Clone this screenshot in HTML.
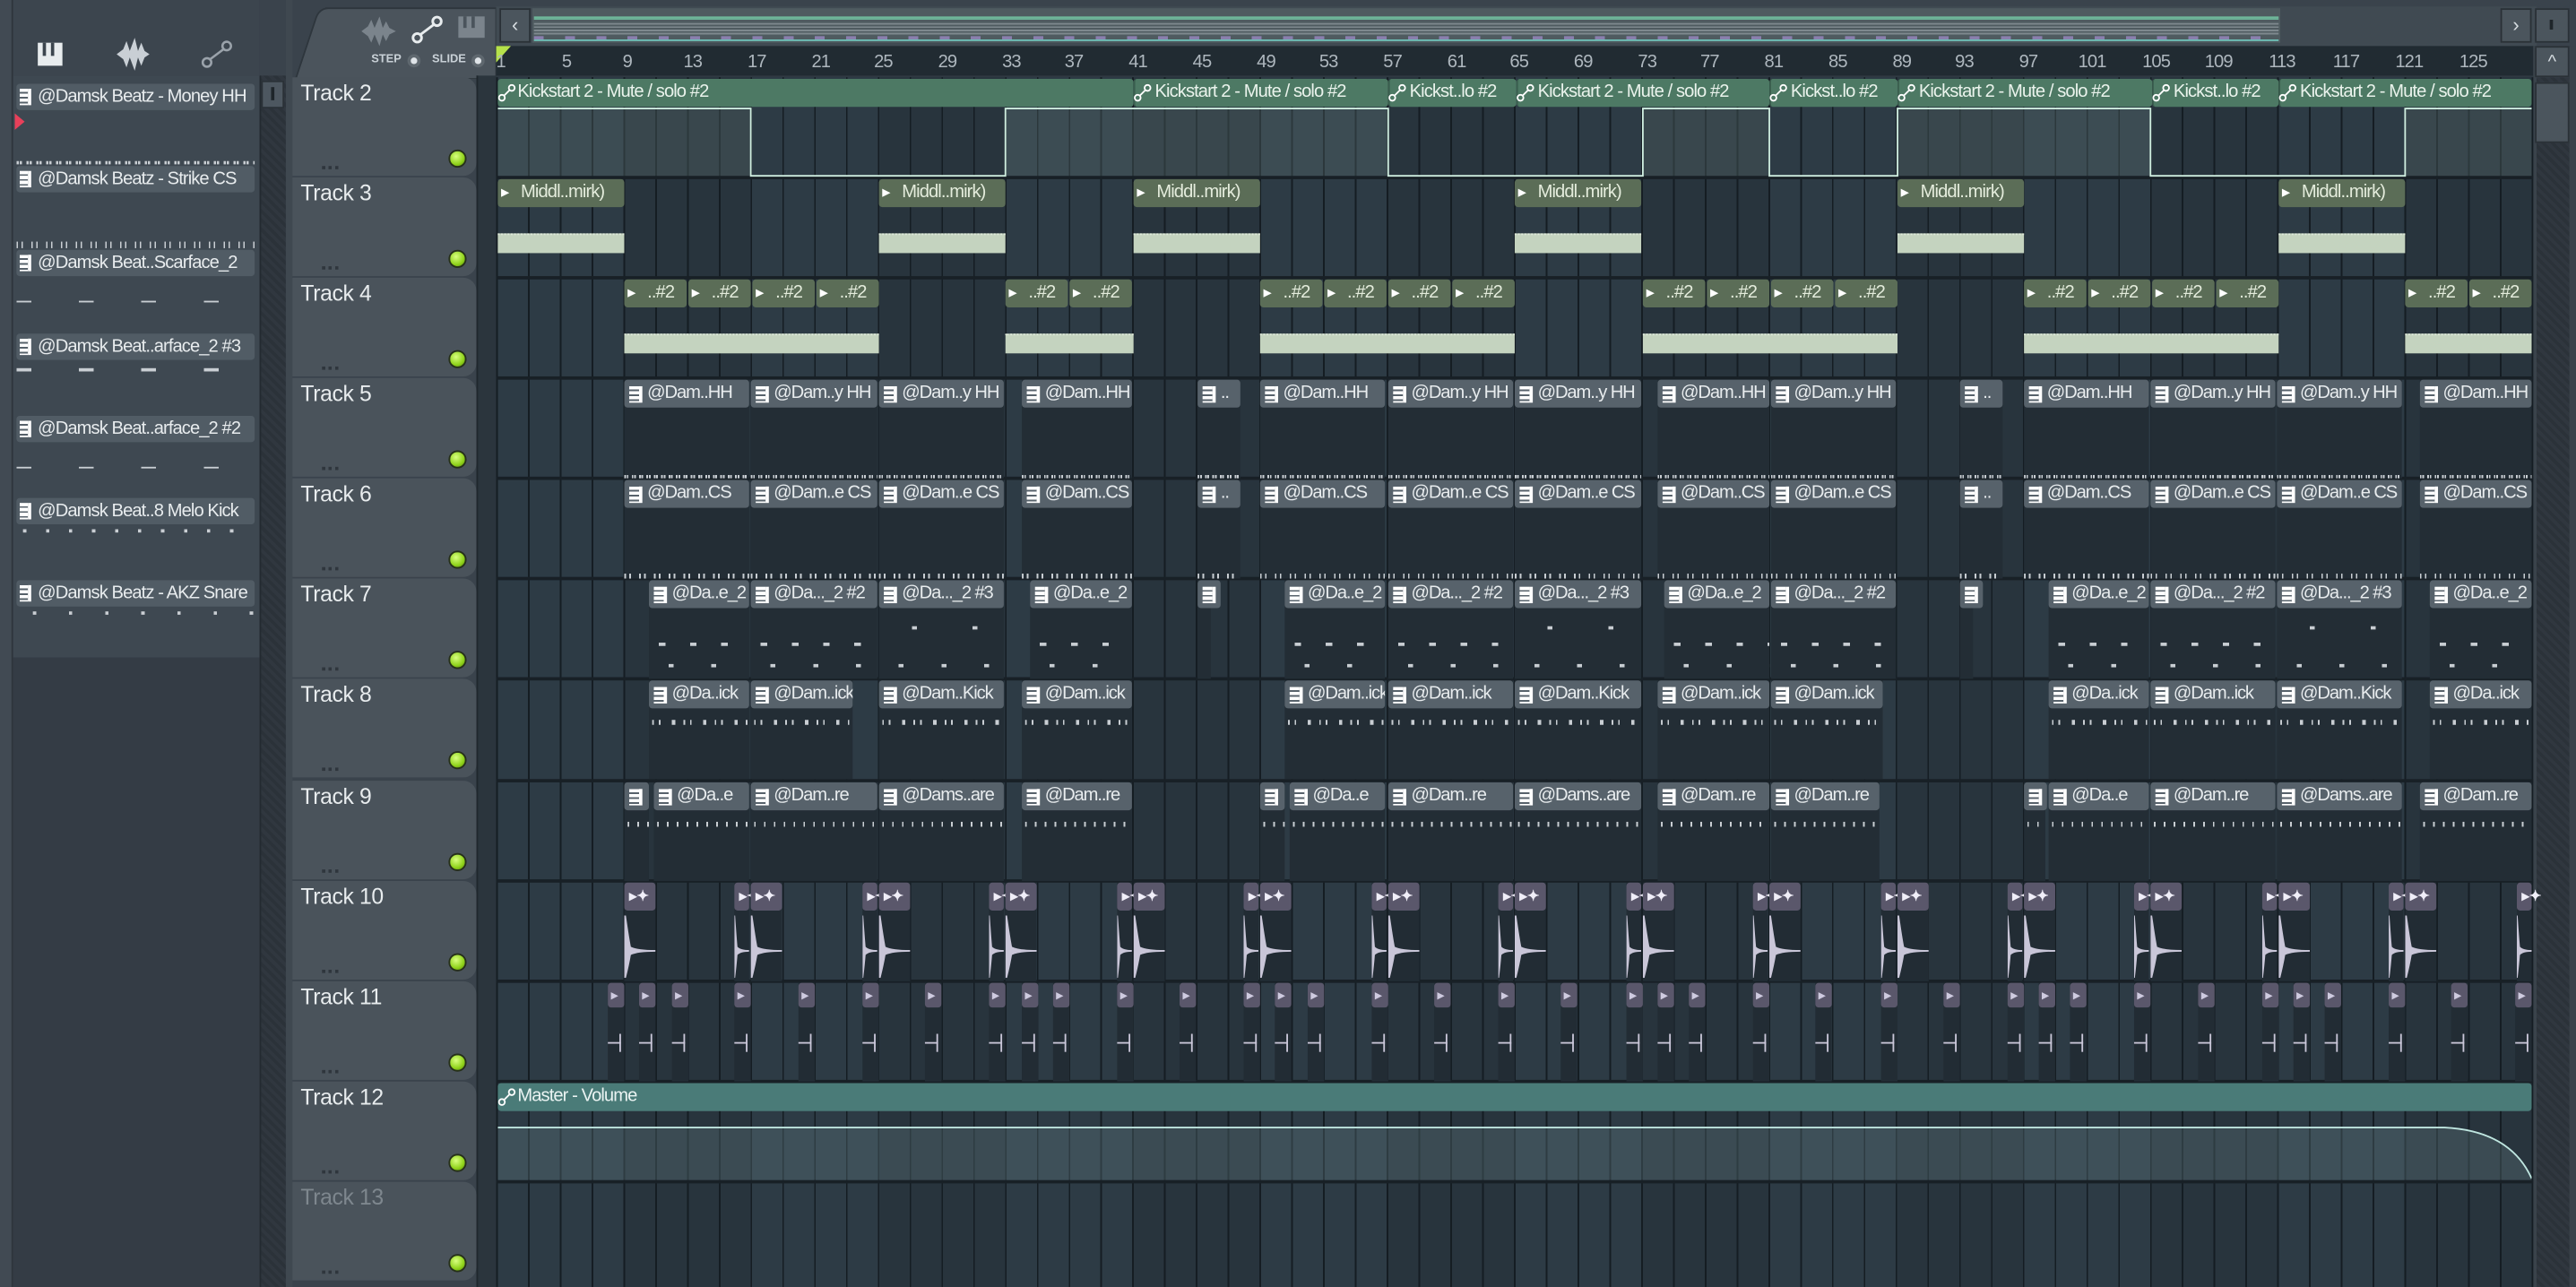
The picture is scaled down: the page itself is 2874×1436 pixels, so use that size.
<!DOCTYPE html>
<html><head><meta charset="utf-8">
<style>
*{margin:0;padding:0;box-sizing:border-box}
html,body{width:2874px;height:1436px;overflow:hidden;background:#3a434c}
#s{position:absolute;left:0;top:0;width:1568px;height:783px;transform:scale(1.8329,1.8339);transform-origin:0 0;font-family:"Liberation Sans",sans-serif;background:#3a434c;overflow:hidden}
.a{position:absolute}
.lbl{position:absolute;left:10px;width:145px;height:16px;background:#515c65;border-radius:2px;color:#e8ecee;font-size:11px;line-height:16px;padding-left:13px;white-space:nowrap;overflow:hidden;letter-spacing:-0.5px}
.ic{position:absolute;left:2px;top:3px;width:7px;height:10px;background:repeating-linear-gradient(180deg,#fff 0 2px,#56616a 2px 3px);border-right:2px solid #fff}
.th{position:absolute;left:178px;width:112px;height:60px;background:#4a535b;border-radius:0 8px 8px 0;color:#e8ecee;font-size:13.5px;padding:2px 0 0 5px;letter-spacing:-0.2px}
.th .led{position:absolute;right:6px;bottom:5px;width:11px;height:11px;border-radius:50%;background:radial-gradient(circle at 40% 35%,#d8ff80,#8fd21a 60%,#4d7a0a);border:1px solid #26301a}
.th .dd{position:absolute;left:18px;bottom:4px;width:10px;height:2px;background:repeating-linear-gradient(90deg,#2f363d 0 2px,transparent 2px 4px)}
#grid{position:absolute;left:302px;top:47px;width:1240px;height:736px;background:
repeating-linear-gradient(90deg,#151d23 0 1px,transparent 1px 19.36px),
repeating-linear-gradient(90deg,#2d3b45 0 77.44px,#28343d 77.44px 154.88px)}
.rl{position:absolute;left:302px;width:1240px;height:2px;background:#182026}
.p{position:absolute;height:60px;background:#232d35}
.p b{display:block;position:relative;height:17px;background:#57626b;border-radius:2px;color:#e8ecee;font-weight:normal;font-size:11px;line-height:17px;padding-left:14px;white-space:nowrap;overflow:hidden;letter-spacing:-0.6px}
.p b:before{content:"";position:absolute;left:3px;top:4px;width:6px;height:10px;background:repeating-linear-gradient(180deg,#fff 0 2px,#57626b 2px 3px);border-right:2px solid #fff}
.n5{position:absolute;left:0;right:0;bottom:0;height:2px;background:repeating-linear-gradient(90deg,#c9ced3 0 1px,transparent 1px 1.5px,#c9ced3 1.5px 2.5px,transparent 2.5px 4.5px)}
.n6{position:absolute;left:0;right:0;bottom:0;height:3px;background:repeating-linear-gradient(90deg,#c9ced3 0 1px,transparent 1px 3px,#c9ced3 3px 4px,transparent 4px 9px)}
.n7{position:absolute;left:0;right:0;top:38px;height:2px;background:repeating-linear-gradient(90deg,transparent 0 6px,#c9ced3 6px 10px,transparent 10px 19px)}
.n7b{position:absolute;left:0;right:0;top:51px;height:2px;background:repeating-linear-gradient(90deg,transparent 0 12px,#c9ced3 12px 15px,transparent 15px 26px)}
.n7c{position:absolute;left:0;right:0;top:28px;height:2px;background:repeating-linear-gradient(90deg,transparent 0 20px,#c9ced3 20px 23px,transparent 23px 37px)}
.n8{position:absolute;left:2px;right:0;top:24px;height:3px;background:repeating-linear-gradient(90deg,#c9ced3 0 1px,transparent 1px 4px,#c9ced3 4px 5px,transparent 5px 12px,#c9ced3 12px 14px,transparent 14px 19px)}
.n9{position:absolute;left:2px;right:0;top:24px;height:3px;background:repeating-linear-gradient(90deg,#c9ced3 0 1px,transparent 1px 6px)}
.au{position:absolute;height:60px}
.au b{display:block;height:17px;background:#5b6d57;border-radius:2px;color:#e4ecdc;font-weight:normal;font-size:11px;line-height:17px;padding-left:14px;white-space:nowrap;overflow:hidden;position:relative;letter-spacing:-0.5px}
.au b:before{content:"\25B8";position:absolute;left:2px;top:0;font-size:10px;color:#fff}
.wv{position:absolute;left:0;right:0;top:33px;height:12px;background:#c4d3bf;border-top:1px dotted #e0eadc}
.k{position:absolute;height:60px;background:#222c34}
.k b{display:block;height:17px;background:#5a576b;border-radius:2px;position:relative}
.k b:before{content:"\25B8\2726";position:absolute;left:3px;top:0;font-size:9px;line-height:17px;color:#f0eef8}
.kw{position:absolute;left:0;top:20px;width:100%;height:38px}
.t{position:absolute;height:60px;background:#222c34}
.t b{display:block;height:15px;width:10px;background:#5a576b;border-radius:2px;position:relative}
.t b:before{content:"\25B8";position:absolute;left:2px;top:0;font-size:8px;line-height:15px;color:#cfcbe0}
.t i{position:absolute;left:0;top:36px;width:8px;height:1px;background:#c9c6d8}
.t i:after{content:"";position:absolute;right:0;top:-5px;width:1px;height:11px;background:#c9c6d8}
</style></head><body><div id="s">

<div class="a" style="left:0;top:0;width:8px;height:783px;background:#414a53;border-right:1px solid #2e353c"></div>
<div class="a" style="left:8px;top:0;width:150px;height:783px;background:#343c45"></div>
<div class="a" style="left:8px;top:0;width:150px;height:46px;background:#3c454e"></div>
<div class="a" style="left:8px;top:46px;width:150px;height:354px;background:#3e4851"></div>
<div class="a" style="left:23px;top:26px;width:15px;height:14px;background:#e8ecee"></div>
<div class="a" style="left:26px;top:26px;width:2px;height:8px;background:#3c454e"></div>
<div class="a" style="left:31px;top:26px;width:2px;height:8px;background:#3c454e"></div>
<svg class="a" style="left:70px;top:22px" width="26" height="22"><path d="M1 11 L5 8 L7 3 L9 9 L12 1 L14 9 L16 4 L18 9 L21 11 L18 13 L16 18 L14 13 L12 21 L9 13 L7 19 L5 14 Z" fill="#c9cfd5"/></svg>
<svg class="a" style="left:122px;top:24px" width="20" height="18"><circle cx="4" cy="14" r="2.6" fill="none" stroke="#9aa2aa" stroke-width="1.4"/><circle cx="16" cy="4" r="2.6" fill="none" stroke="#9aa2aa" stroke-width="1.4"/><line x1="6" y1="12" x2="14" y2="6" stroke="#9aa2aa" stroke-width="1.4"/></svg>

<div class="lbl" style="top:51px"><span class="ic"></span>@Damsk Beatz - Money HH</div>
<div class="a" style="left:9px;top:69px;width:0;height:0;border-top:5px solid transparent;border-bottom:5px solid transparent;border-left:6px solid #e8405a"></div>
<div class="a" style="left:10px;top:98px;width:145px;height:2px;background:repeating-linear-gradient(90deg,#c9ced3 0 1.5px,transparent 1.5px 2px,#c9ced3 2px 3.5px,transparent 3.5px 6px)"></div>
<div class="lbl" style="top:101px"><span class="ic"></span>@Damsk Beatz - Strike CS</div>
<div class="a" style="left:10px;top:147px;width:145px;height:4px;background:repeating-linear-gradient(90deg,#c9ced3 0 1px,transparent 1px 3px,#c9ced3 3px 4px,transparent 4px 9px)"></div>
<div class="lbl" style="top:152px"><span class="ic"></span>@Damsk Beat..Scarface_2</div>
<div class="a" style="left:10px;top:183px;width:145px;height:1px;background:repeating-linear-gradient(90deg,#c9ced3 0 9px,transparent 9px 38px)"></div>
<div class="lbl" style="top:203px"><span class="ic"></span>@Damsk Beat..arface_2 #3</div>
<div class="a" style="left:10px;top:224px;width:145px;height:2px;background:repeating-linear-gradient(90deg,#c9ced3 0 9px,transparent 9px 38px)"></div>
<div class="lbl" style="top:253px"><span class="ic"></span>@Damsk Beat..arface_2 #2</div>
<div class="a" style="left:10px;top:284px;width:145px;height:1px;background:repeating-linear-gradient(90deg,#c9ced3 0 9px,transparent 9px 38px)"></div>
<div class="lbl" style="top:303px"><span class="ic"></span>@Damsk Beat..8 Melo Kick</div>
<div class="a" style="left:14px;top:322px;width:140px;height:2px;background:repeating-linear-gradient(90deg,#c9ced3 0 2px,transparent 2px 14px)"></div>
<div class="lbl" style="top:353px"><span class="ic"></span>@Damsk Beatz - AKZ Snare</div>
<div class="a" style="left:20px;top:372px;width:135px;height:2px;background:repeating-linear-gradient(90deg,#c9ced3 0 2px,transparent 2px 22px)"></div>

<div class="a" style="left:158px;top:46px;width:16px;height:737px;background:repeating-linear-gradient(45deg,#30373f 0 2px,#2b3239 2px 4px);border-left:1px solid #232a30"></div>
<div class="a" style="left:159px;top:49px;width:14px;height:17px;background:#4d5760;border:1px solid #2a3137"></div>
<div class="a" style="left:165px;top:53px;width:2px;height:8px;background:#1e252a"></div>
<div class="a" style="left:174px;top:0;width:4px;height:783px;background:#3f4850"></div>

<svg class="a" style="left:178px;top:4px" width="124" height="44"><path d="M20 1 H124 V44 H2 L14 8 Q16 1 22 1 Z" fill="#4b545c" stroke="#2e363d"/></svg>
<svg class="a" style="left:219px;top:9px" width="24" height="20"><path d="M1 10 L5 7 L7 3 L9 8 L12 1 L14 8 L16 4 L18 8 L22 10 L18 12 L16 16 L14 12 L12 19 L9 12 L7 17 L5 13 Z" fill="#7b848c"/></svg>
<svg class="a" style="left:250px;top:9px" width="20" height="18"><circle cx="4" cy="14" r="2.6" fill="none" stroke="#e8ecee" stroke-width="1.6"/><circle cx="16" cy="4" r="2.6" fill="none" stroke="#e8ecee" stroke-width="1.6"/><line x1="6" y1="12" x2="14" y2="6" stroke="#e8ecee" stroke-width="1.6"/></svg>
<div class="a" style="left:279px;top:10px;width:16px;height:13px;background:#7b848c"></div>
<div class="a" style="left:282px;top:10px;width:2px;height:7px;background:#4b545c"></div>
<div class="a" style="left:287px;top:10px;width:2px;height:7px;background:#4b545c"></div>
<div class="a" style="left:226px;top:33px;color:#c8d0d6;font-size:7px;font-weight:bold">STEP</div>
<div class="a" style="left:248px;top:33px;width:8px;height:8px;border-radius:50%;background:#dfe4e8;border:2px solid #5f686f"></div>
<div class="a" style="left:263px;top:33px;color:#c8d0d6;font-size:7px;font-weight:bold">SLIDE</div>
<div class="a" style="left:287px;top:33px;width:8px;height:8px;border-radius:50%;background:#dfe4e8;border:2px solid #5f686f"></div>

<div class="a" style="left:302px;top:4px;width:1242px;height:24px;background:#404a52"></div>
<div class="a" style="left:304px;top:5px;width:19px;height:21px;background:#4b555d;border:1px solid #2a3137;color:#d7dde1;font-size:12px;text-align:center;line-height:19px">&lsaquo;</div>
<div class="a" style="left:324px;top:5px;width:1064px;height:21px;background:#4f5b60"></div>
<div class="a" style="left:325px;top:10px;width:1062px;height:2px;border-top:1px solid #6eb79a;border-bottom:1px solid #6eb79a"></div>
<div class="a" style="left:325px;top:14px;width:1062px;height:8px;background:repeating-linear-gradient(180deg,#a4aeb3 0 1px,transparent 1px 2px);opacity:.55"></div>
<div class="a" style="left:325px;top:22px;width:1062px;height:2px;background:repeating-linear-gradient(90deg,#8a7fae 0 6px,transparent 6px 19px)"></div>
<div class="a" style="left:325px;top:24px;width:1062px;height:1px;background:#6fbfb7"></div>
<div class="a" style="left:1522px;top:5px;width:19px;height:21px;background:#4b555d;border:1px solid #2a3137;color:#d7dde1;font-size:12px;text-align:center;line-height:19px">&rsaquo;</div>
<div class="a" style="left:1543px;top:5px;width:21px;height:21px;background:#4b555d;border:1px solid #2a3137"></div>
<div class="a" style="left:1552px;top:12px;width:2px;height:6px;background:#1e252a"></div>

<div class="a" style="left:302px;top:28px;width:1240px;height:19px;background:#212b32;border-bottom:1px solid #2f3a42"></div>
<div class="a" style="left:302px;top:28px;width:0;height:0;border-left:9px solid #b6e24a;border-bottom:10px solid transparent"></div>
<div class="a" style="left:302px;top:30px;width:1240px;height:16px;color:#aeb7be;font-size:11px;line-height:16px;letter-spacing:-0.5px">
<span class="a" style="left:0">1</span><span class="a" style="left:40px">5</span><span class="a" style="left:77px">9</span><span class="a" style="left:114px">13</span><span class="a" style="left:153px">17</span><span class="a" style="left:192px">21</span><span class="a" style="left:230px">25</span><span class="a" style="left:269px">29</span><span class="a" style="left:308px">33</span><span class="a" style="left:346px">37</span><span class="a" style="left:385px">41</span><span class="a" style="left:424px">45</span><span class="a" style="left:463px">49</span><span class="a" style="left:501px">53</span><span class="a" style="left:540px">57</span><span class="a" style="left:579px">61</span><span class="a" style="left:617px">65</span><span class="a" style="left:656px">69</span><span class="a" style="left:695px">73</span><span class="a" style="left:733px">77</span><span class="a" style="left:772px">81</span><span class="a" style="left:811px">85</span><span class="a" style="left:850px">89</span><span class="a" style="left:888px">93</span><span class="a" style="left:927px">97</span><span class="a" style="left:963px">101</span><span class="a" style="left:1002px">105</span><span class="a" style="left:1040px">109</span><span class="a" style="left:1079px">113</span><span class="a" style="left:1118px">117</span><span class="a" style="left:1156px">121</span><span class="a" style="left:1195px">125</span></div>

<div class="a" style="left:1542px;top:28px;width:26px;height:755px;background:#3a434b"></div>
<div class="a" style="left:1544px;top:47px;width:20px;height:736px;background:repeating-linear-gradient(45deg,#30373f 0 2px,#2b3239 2px 4px)"></div>
<div class="a" style="left:1543px;top:28px;width:21px;height:19px;background:#4b555d;border:1px solid #2a3137;color:#d7dde1;font-size:11px;text-align:center;line-height:19px">^</div>
<div class="a" style="left:1543px;top:50px;width:21px;height:37px;background:#4b555d;border:1px solid #2a3137"></div>

<div class="a" style="left:290px;top:46px;width:12px;height:737px;background:#2b353d;border-left:1px solid #1f272d"></div>

<div class="th" style="top:47px">Track 2<i class="dd"></i><i class="led"></i></div>
<div class="th" style="top:108px">Track 3<i class="dd"></i><i class="led"></i></div>
<div class="th" style="top:169px">Track 4<i class="dd"></i><i class="led"></i></div>
<div class="th" style="top:230px">Track 5<i class="dd"></i><i class="led"></i></div>
<div class="th" style="top:291px">Track 6<i class="dd"></i><i class="led"></i></div>
<div class="th" style="top:352px">Track 7<i class="dd"></i><i class="led"></i></div>
<div class="th" style="top:413px">Track 8<i class="dd"></i><i class="led"></i></div>
<div class="th" style="top:475px">Track 9<i class="dd"></i><i class="led"></i></div>
<div class="th" style="top:536px">Track 10<i class="dd"></i><i class="led"></i></div>
<div class="th" style="top:597px">Track 11<i class="dd"></i><i class="led"></i></div>
<div class="th" style="top:658px">Track 12<i class="dd"></i><i class="led"></i></div>
<div class="th" style="top:719px;color:#7e878e">Track 13<i class="dd"></i><i class="led"></i></div>

<div id="grid"></div>
<div class="rl" style="top:107px"></div><div class="rl" style="top:168px"></div><div class="rl" style="top:229px"></div><div class="rl" style="top:290px"></div><div class="rl" style="top:351px"></div><div class="rl" style="top:412px"></div><div class="rl" style="top:474px"></div><div class="rl" style="top:535px"></div><div class="rl" style="top:596px"></div><div class="rl" style="top:657px"></div><div class="rl" style="top:718px"></div>

<div class="a" style="left:303px;top:66px;width:154px;height:41px;background:rgba(90,110,110,.35)"></div>
<div class="a" style="left:612px;top:66px;width:233px;height:41px;background:rgba(90,110,110,.35)"></div>
<div class="a" style="left:1000px;top:66px;width:77px;height:41px;background:rgba(90,110,110,.35)"></div>
<div class="a" style="left:1155px;top:66px;width:154px;height:41px;background:rgba(90,110,110,.35)"></div>
<div class="a" style="left:1464px;top:66px;width:77px;height:41px;background:rgba(90,110,110,.35)"></div>
<svg class="a" style="left:303px;top:65px" width="1240" height="44"><path d="M0 1 H154 V42 H309 V1 H542 V42 H697 V1 H774 V42 H852 V1 H1006 V42 H1161 V1 H1238" fill="none" stroke="#cfeee0" stroke-width="1"/></svg>
<div class="a" style="left:303px;top:48px;height:17px;width:1238px;color:#eaf3ec;font-size:11px;line-height:17px;letter-spacing:-0.5px;white-space:nowrap">
<div class="a" style="left:0;width:387px;height:17px;background:#4d7964;border-radius:2px;padding-left:12px">Kickstart 2 - Mute / solo #2</div>
<div class="a" style="left:387px;width:155px;height:17px;background:#4d7964;border-radius:2px;padding-left:12px;border-left:1px solid #3a5e4e">Kickstart 2 - Mute / solo #2</div>
<div class="a" style="left:542px;width:78px;height:17px;background:#4d7964;border-radius:2px;padding-left:12px;border-left:1px solid #3a5e4e">Kickst..lo #2</div>
<div class="a" style="left:620px;width:154px;height:17px;background:#4d7964;border-radius:2px;padding-left:12px;border-left:1px solid #3a5e4e">Kickstart 2 - Mute / solo #2</div>
<div class="a" style="left:774px;width:78px;height:17px;background:#4d7964;border-radius:2px;padding-left:12px;border-left:1px solid #3a5e4e">Kickst..lo #2</div>
<div class="a" style="left:852px;width:155px;height:17px;background:#4d7964;border-radius:2px;padding-left:12px;border-left:1px solid #3a5e4e">Kickstart 2 - Mute / solo #2</div>
<div class="a" style="left:1007px;width:77px;height:17px;background:#4d7964;border-radius:2px;padding-left:12px;border-left:1px solid #3a5e4e">Kickst..lo #2</div>
<div class="a" style="left:1084px;width:154px;height:17px;background:#4d7964;border-radius:2px;padding-left:12px;border-left:1px solid #3a5e4e;overflow:hidden">Kickstart 2 - Mute / solo #2</div>
</div>

<div class="au" style="left:303px;top:109px;width:77px"><b>Middl..mirk)</b><i class="wv"></i></div>
<div class="au" style="left:535px;top:109px;width:77px"><b>Middl..mirk)</b><i class="wv"></i></div>
<div class="au" style="left:690px;top:109px;width:77px"><b>Middl..mirk)</b><i class="wv"></i></div>
<div class="au" style="left:922px;top:109px;width:77px"><b>Middl..mirk)</b><i class="wv"></i></div>
<div class="au" style="left:1155px;top:109px;width:77px"><b>Middl..mirk)</b><i class="wv"></i></div>
<div class="au" style="left:1387px;top:109px;width:77px"><b>Middl..mirk)</b><i class="wv"></i></div>

<div class="au" style="left:380px;top:170px;width:155px"><i class="wv"></i></div>
<div class="au" style="left:612px;top:170px;width:78px"><i class="wv"></i></div>
<div class="au" style="left:767px;top:170px;width:155px"><i class="wv"></i></div>
<div class="au" style="left:1000px;top:170px;width:155px"><i class="wv"></i></div>
<div class="au" style="left:1232px;top:170px;width:155px"><i class="wv"></i></div>
<div class="au" style="left:1464px;top:170px;width:77px"><i class="wv"></i></div>
<div class="au" style="left:380px;top:170px;width:38px;height:17px"><b>..#2</b></div><div class="au" style="left:419px;top:170px;width:38px;height:17px"><b>..#2</b></div><div class="au" style="left:458px;top:170px;width:38px;height:17px"><b>..#2</b></div><div class="au" style="left:497px;top:170px;width:38px;height:17px"><b>..#2</b></div>
<div class="au" style="left:612px;top:170px;width:38px;height:17px"><b>..#2</b></div><div class="au" style="left:651px;top:170px;width:38px;height:17px"><b>..#2</b></div>
<div class="au" style="left:767px;top:170px;width:38px;height:17px"><b>..#2</b></div><div class="au" style="left:806px;top:170px;width:38px;height:17px"><b>..#2</b></div><div class="au" style="left:845px;top:170px;width:38px;height:17px"><b>..#2</b></div><div class="au" style="left:884px;top:170px;width:38px;height:17px"><b>..#2</b></div>
<div class="au" style="left:1000px;top:170px;width:38px;height:17px"><b>..#2</b></div><div class="au" style="left:1039px;top:170px;width:38px;height:17px"><b>..#2</b></div><div class="au" style="left:1078px;top:170px;width:38px;height:17px"><b>..#2</b></div><div class="au" style="left:1117px;top:170px;width:38px;height:17px"><b>..#2</b></div>
<div class="au" style="left:1232px;top:170px;width:38px;height:17px"><b>..#2</b></div><div class="au" style="left:1271px;top:170px;width:38px;height:17px"><b>..#2</b></div><div class="au" style="left:1310px;top:170px;width:38px;height:17px"><b>..#2</b></div><div class="au" style="left:1349px;top:170px;width:38px;height:17px"><b>..#2</b></div>
<div class="au" style="left:1464px;top:170px;width:38px;height:17px"><b>..#2</b></div><div class="au" style="left:1503px;top:170px;width:38px;height:17px"><b>..#2</b></div>

<div class="p" style="left:380px;top:231px;width:76px"><b>@Dam..HH</b><i class="n5"></i></div>
<div class="p" style="left:457px;top:231px;width:77px"><b>@Dam..y HH</b><i class="n5"></i></div>
<div class="p" style="left:535px;top:231px;width:76px"><b>@Dam..y HH</b><i class="n5"></i></div>
<div class="p" style="left:622px;top:231px;width:67px"><b>@Dam..HH</b><i class="n5"></i></div>
<div class="p" style="left:729px;top:231px;width:26px"><b>..</b><i class="n5"></i></div>
<div class="p" style="left:767px;top:231px;width:76px"><b>@Dam..HH</b><i class="n5"></i></div>
<div class="p" style="left:845px;top:231px;width:76px"><b>@Dam..y HH</b><i class="n5"></i></div>
<div class="p" style="left:922px;top:231px;width:77px"><b>@Dam..y HH</b><i class="n5"></i></div>
<div class="p" style="left:1009px;top:231px;width:68px"><b>@Dam..HH</b><i class="n5"></i></div>
<div class="p" style="left:1078px;top:231px;width:76px"><b>@Dam..y HH</b><i class="n5"></i></div>
<div class="p" style="left:1193px;top:231px;width:26px"><b>..</b><i class="n5"></i></div>
<div class="p" style="left:1232px;top:231px;width:76px"><b>@Dam..HH</b><i class="n5"></i></div>
<div class="p" style="left:1309px;top:231px;width:76px"><b>@Dam..y HH</b><i class="n5"></i></div>
<div class="p" style="left:1386px;top:231px;width:76px"><b>@Dam..y HH</b><i class="n5"></i></div>
<div class="p" style="left:1473px;top:231px;width:68px"><b>@Dam..HH</b><i class="n5"></i></div>

<div class="p" style="left:380px;top:292px;width:76px"><b>@Dam..CS</b><i class="n6"></i></div>
<div class="p" style="left:457px;top:292px;width:77px"><b>@Dam..e CS</b><i class="n6"></i></div>
<div class="p" style="left:535px;top:292px;width:76px"><b>@Dam..e CS</b><i class="n6"></i></div>
<div class="p" style="left:622px;top:292px;width:67px"><b>@Dam..CS</b><i class="n6"></i></div>
<div class="p" style="left:729px;top:292px;width:26px"><b>..</b><i class="n6"></i></div>
<div class="p" style="left:767px;top:292px;width:76px"><b>@Dam..CS</b><i class="n6"></i></div>
<div class="p" style="left:845px;top:292px;width:76px"><b>@Dam..e CS</b><i class="n6"></i></div>
<div class="p" style="left:922px;top:292px;width:77px"><b>@Dam..e CS</b><i class="n6"></i></div>
<div class="p" style="left:1009px;top:292px;width:68px"><b>@Dam..CS</b><i class="n6"></i></div>
<div class="p" style="left:1078px;top:292px;width:76px"><b>@Dam..e CS</b><i class="n6"></i></div>
<div class="p" style="left:1193px;top:292px;width:26px"><b>..</b><i class="n6"></i></div>
<div class="p" style="left:1232px;top:292px;width:76px"><b>@Dam..CS</b><i class="n6"></i></div>
<div class="p" style="left:1309px;top:292px;width:76px"><b>@Dam..e CS</b><i class="n6"></i></div>
<div class="p" style="left:1386px;top:292px;width:76px"><b>@Dam..e CS</b><i class="n6"></i></div>
<div class="p" style="left:1473px;top:292px;width:68px"><b>@Dam..CS</b><i class="n6"></i></div>

<div class="p" style="left:395px;top:353px;width:61px"><b>@Da..e_2</b><i class="n7"></i><i class="n7b"></i></div>
<div class="p" style="left:457px;top:353px;width:77px"><b>@Da..._2 #2</b><i class="n7b"></i><i class="n7"></i></div>
<div class="p" style="left:535px;top:353px;width:76px"><b>@Da..._2 #3</b><i class="n7c"></i><i class="n7b"></i></div>
<div class="p" style="left:627px;top:353px;width:62px"><b>@Da..e_2</b><i class="n7"></i><i class="n7b"></i></div>
<div class="p" style="left:729px;top:353px;width:8px"><b></b></div>
<div class="p" style="left:782px;top:353px;width:61px"><b>@Da..e_2</b><i class="n7"></i><i class="n7b"></i></div>
<div class="p" style="left:845px;top:353px;width:76px"><b>@Da..._2 #2</b><i class="n7b"></i><i class="n7"></i></div>
<div class="p" style="left:922px;top:353px;width:77px"><b>@Da..._2 #3</b><i class="n7c"></i><i class="n7b"></i></div>
<div class="p" style="left:1013px;top:353px;width:64px"><b>@Da..e_2</b><i class="n7"></i><i class="n7b"></i></div>
<div class="p" style="left:1078px;top:353px;width:76px"><b>@Da..._2 #2</b><i class="n7b"></i><i class="n7"></i></div>
<div class="p" style="left:1193px;top:353px;width:8px"><b></b></div>
<div class="p" style="left:1247px;top:353px;width:61px"><b>@Da..e_2</b><i class="n7"></i><i class="n7b"></i></div>
<div class="p" style="left:1309px;top:353px;width:76px"><b>@Da..._2 #2</b><i class="n7b"></i><i class="n7"></i></div>
<div class="p" style="left:1386px;top:353px;width:76px"><b>@Da..._2 #3</b><i class="n7c"></i><i class="n7b"></i></div>
<div class="p" style="left:1479px;top:353px;width:62px"><b>@Da..e_2</b><i class="n7"></i><i class="n7b"></i></div>

<div class="p" style="left:395px;top:414px;width:61px"><b>@Da..ick</b><i class="n8"></i></div>
<div class="p" style="left:457px;top:414px;width:62px"><b>@Dam..ick</b><i class="n8"></i></div>
<div class="p" style="left:535px;top:414px;width:76px"><b>@Dam..Kick</b><i class="n8"></i></div>
<div class="p" style="left:622px;top:414px;width:67px"><b>@Dam..ick</b><i class="n8"></i></div>
<div class="p" style="left:782px;top:414px;width:61px"><b>@Dam..ick</b><i class="n8"></i></div>
<div class="p" style="left:845px;top:414px;width:76px"><b>@Dam..ick</b><i class="n8"></i></div>
<div class="p" style="left:922px;top:414px;width:77px"><b>@Dam..Kick</b><i class="n8"></i></div>
<div class="p" style="left:1009px;top:414px;width:68px"><b>@Dam..ick</b><i class="n8"></i></div>
<div class="p" style="left:1078px;top:414px;width:68px"><b>@Dam..ick</b><i class="n8"></i></div>
<div class="p" style="left:1247px;top:414px;width:61px"><b>@Da..ick</b><i class="n8"></i></div>
<div class="p" style="left:1309px;top:414px;width:76px"><b>@Dam..ick</b><i class="n8"></i></div>
<div class="p" style="left:1386px;top:414px;width:76px"><b>@Dam..Kick</b><i class="n8"></i></div>
<div class="p" style="left:1479px;top:414px;width:62px"><b>@Da..ick</b><i class="n8"></i></div>

<div class="p" style="left:380px;top:476px;width:15px"><b></b><i class="n9"></i></div>
<div class="p" style="left:398px;top:476px;width:58px"><b>@Da..e</b><i class="n9"></i></div>
<div class="p" style="left:457px;top:476px;width:77px"><b>@Dam..re</b><i class="n9"></i></div>
<div class="p" style="left:535px;top:476px;width:76px"><b>@Dams..are</b><i class="n9"></i></div>
<div class="p" style="left:622px;top:476px;width:67px"><b>@Dam..re</b><i class="n9"></i></div>
<div class="p" style="left:767px;top:476px;width:15px"><b></b><i class="n9"></i></div>
<div class="p" style="left:785px;top:476px;width:58px"><b>@Da..e</b><i class="n9"></i></div>
<div class="p" style="left:845px;top:476px;width:76px"><b>@Dam..re</b><i class="n9"></i></div>
<div class="p" style="left:922px;top:476px;width:77px"><b>@Dams..are</b><i class="n9"></i></div>
<div class="p" style="left:1009px;top:476px;width:68px"><b>@Dam..re</b><i class="n9"></i></div>
<div class="p" style="left:1078px;top:476px;width:66px"><b>@Dam..re</b><i class="n9"></i></div>
<div class="p" style="left:1232px;top:476px;width:13px"><b></b><i class="n9"></i></div>
<div class="p" style="left:1247px;top:476px;width:61px"><b>@Da..e</b><i class="n9"></i></div>
<div class="p" style="left:1309px;top:476px;width:76px"><b>@Dam..re</b><i class="n9"></i></div>
<div class="p" style="left:1386px;top:476px;width:76px"><b>@Dams..are</b><i class="n9"></i></div>
<div class="p" style="left:1473px;top:476px;width:68px"><b>@Dam..re</b><i class="n9"></i></div>

<svg width="0" height="0" style="position:absolute"><defs><path id="kk" d="M0 0 L1 0 Q3 14 4 19 Q8 21 19 21 L19 22 Q8 22 4 24 Q3 30 1 38 L0 38 Z" fill="#c9c6d8"/></defs></svg>
<div class="k" style="left:380px;top:537px;width:19px"><b></b><svg class="kw" viewBox="0 0 19 38" preserveAspectRatio="none"><use href="#kk"/></svg></div>
<div class="k" style="left:447px;top:537px;width:9px"><b></b><svg class="kw" viewBox="0 0 19 38" preserveAspectRatio="none"><use href="#kk"/></svg></div>
<div class="k" style="left:457px;top:537px;width:19px"><b></b><svg class="kw" viewBox="0 0 19 38" preserveAspectRatio="none"><use href="#kk"/></svg></div>
<div class="k" style="left:525px;top:537px;width:9px"><b></b><svg class="kw" viewBox="0 0 19 38" preserveAspectRatio="none"><use href="#kk"/></svg></div>
<div class="k" style="left:535px;top:537px;width:19px"><b></b><svg class="kw" viewBox="0 0 19 38" preserveAspectRatio="none"><use href="#kk"/></svg></div>
<div class="k" style="left:602px;top:537px;width:9px"><b></b><svg class="kw" viewBox="0 0 19 38" preserveAspectRatio="none"><use href="#kk"/></svg></div>
<div class="k" style="left:612px;top:537px;width:19px"><b></b><svg class="kw" viewBox="0 0 19 38" preserveAspectRatio="none"><use href="#kk"/></svg></div>
<div class="k" style="left:680px;top:537px;width:9px"><b></b><svg class="kw" viewBox="0 0 19 38" preserveAspectRatio="none"><use href="#kk"/></svg></div>
<div class="k" style="left:690px;top:537px;width:19px"><b></b><svg class="kw" viewBox="0 0 19 38" preserveAspectRatio="none"><use href="#kk"/></svg></div>
<div class="k" style="left:757px;top:537px;width:9px"><b></b><svg class="kw" viewBox="0 0 19 38" preserveAspectRatio="none"><use href="#kk"/></svg></div>
<div class="k" style="left:767px;top:537px;width:19px"><b></b><svg class="kw" viewBox="0 0 19 38" preserveAspectRatio="none"><use href="#kk"/></svg></div>
<div class="k" style="left:835px;top:537px;width:9px"><b></b><svg class="kw" viewBox="0 0 19 38" preserveAspectRatio="none"><use href="#kk"/></svg></div>
<div class="k" style="left:845px;top:537px;width:19px"><b></b><svg class="kw" viewBox="0 0 19 38" preserveAspectRatio="none"><use href="#kk"/></svg></div>
<div class="k" style="left:912px;top:537px;width:9px"><b></b><svg class="kw" viewBox="0 0 19 38" preserveAspectRatio="none"><use href="#kk"/></svg></div>
<div class="k" style="left:922px;top:537px;width:19px"><b></b><svg class="kw" viewBox="0 0 19 38" preserveAspectRatio="none"><use href="#kk"/></svg></div>
<div class="k" style="left:990px;top:537px;width:9px"><b></b><svg class="kw" viewBox="0 0 19 38" preserveAspectRatio="none"><use href="#kk"/></svg></div>
<div class="k" style="left:1000px;top:537px;width:19px"><b></b><svg class="kw" viewBox="0 0 19 38" preserveAspectRatio="none"><use href="#kk"/></svg></div>
<div class="k" style="left:1067px;top:537px;width:9px"><b></b><svg class="kw" viewBox="0 0 19 38" preserveAspectRatio="none"><use href="#kk"/></svg></div>
<div class="k" style="left:1077px;top:537px;width:19px"><b></b><svg class="kw" viewBox="0 0 19 38" preserveAspectRatio="none"><use href="#kk"/></svg></div>
<div class="k" style="left:1145px;top:537px;width:9px"><b></b><svg class="kw" viewBox="0 0 19 38" preserveAspectRatio="none"><use href="#kk"/></svg></div>
<div class="k" style="left:1155px;top:537px;width:19px"><b></b><svg class="kw" viewBox="0 0 19 38" preserveAspectRatio="none"><use href="#kk"/></svg></div>
<div class="k" style="left:1222px;top:537px;width:9px"><b></b><svg class="kw" viewBox="0 0 19 38" preserveAspectRatio="none"><use href="#kk"/></svg></div>
<div class="k" style="left:1232px;top:537px;width:19px"><b></b><svg class="kw" viewBox="0 0 19 38" preserveAspectRatio="none"><use href="#kk"/></svg></div>
<div class="k" style="left:1299px;top:537px;width:9px"><b></b><svg class="kw" viewBox="0 0 19 38" preserveAspectRatio="none"><use href="#kk"/></svg></div>
<div class="k" style="left:1309px;top:537px;width:19px"><b></b><svg class="kw" viewBox="0 0 19 38" preserveAspectRatio="none"><use href="#kk"/></svg></div>
<div class="k" style="left:1377px;top:537px;width:9px"><b></b><svg class="kw" viewBox="0 0 19 38" preserveAspectRatio="none"><use href="#kk"/></svg></div>
<div class="k" style="left:1387px;top:537px;width:19px"><b></b><svg class="kw" viewBox="0 0 19 38" preserveAspectRatio="none"><use href="#kk"/></svg></div>
<div class="k" style="left:1454px;top:537px;width:9px"><b></b><svg class="kw" viewBox="0 0 19 38" preserveAspectRatio="none"><use href="#kk"/></svg></div>
<div class="k" style="left:1464px;top:537px;width:19px"><b></b><svg class="kw" viewBox="0 0 19 38" preserveAspectRatio="none"><use href="#kk"/></svg></div>
<div class="k" style="left:1532px;top:537px;width:9px"><b></b><svg class="kw" viewBox="0 0 19 38" preserveAspectRatio="none"><use href="#kk"/></svg></div>

<div class="t" style="left:370px;top:598px;width:10px"><b></b><i></i></div>
<div class="t" style="left:389px;top:598px;width:10px"><b></b><i></i></div>
<div class="t" style="left:409px;top:598px;width:10px"><b></b><i></i></div>
<div class="t" style="left:447px;top:598px;width:10px"><b></b><i></i></div>
<div class="t" style="left:486px;top:598px;width:10px"><b></b><i></i></div>
<div class="t" style="left:525px;top:598px;width:10px"><b></b><i></i></div>
<div class="t" style="left:563px;top:598px;width:10px"><b></b><i></i></div>
<div class="t" style="left:602px;top:598px;width:10px"><b></b><i></i></div>
<div class="t" style="left:622px;top:598px;width:10px"><b></b><i></i></div>
<div class="t" style="left:641px;top:598px;width:10px"><b></b><i></i></div>
<div class="t" style="left:680px;top:598px;width:10px"><b></b><i></i></div>
<div class="t" style="left:718px;top:598px;width:10px"><b></b><i></i></div>
<div class="t" style="left:757px;top:598px;width:10px"><b></b><i></i></div>
<div class="t" style="left:776px;top:598px;width:10px"><b></b><i></i></div>
<div class="t" style="left:796px;top:598px;width:10px"><b></b><i></i></div>
<div class="t" style="left:835px;top:598px;width:10px"><b></b><i></i></div>
<div class="t" style="left:873px;top:598px;width:10px"><b></b><i></i></div>
<div class="t" style="left:912px;top:598px;width:10px"><b></b><i></i></div>
<div class="t" style="left:950px;top:598px;width:10px"><b></b><i></i></div>
<div class="t" style="left:990px;top:598px;width:10px"><b></b><i></i></div>
<div class="t" style="left:1009px;top:598px;width:10px"><b></b><i></i></div>
<div class="t" style="left:1028px;top:598px;width:10px"><b></b><i></i></div>
<div class="t" style="left:1067px;top:598px;width:10px"><b></b><i></i></div>
<div class="t" style="left:1105px;top:598px;width:10px"><b></b><i></i></div>
<div class="t" style="left:1145px;top:598px;width:10px"><b></b><i></i></div>
<div class="t" style="left:1183px;top:598px;width:10px"><b></b><i></i></div>
<div class="t" style="left:1222px;top:598px;width:10px"><b></b><i></i></div>
<div class="t" style="left:1241px;top:598px;width:10px"><b></b><i></i></div>
<div class="t" style="left:1260px;top:598px;width:10px"><b></b><i></i></div>
<div class="t" style="left:1299px;top:598px;width:10px"><b></b><i></i></div>
<div class="t" style="left:1338px;top:598px;width:10px"><b></b><i></i></div>
<div class="t" style="left:1377px;top:598px;width:10px"><b></b><i></i></div>
<div class="t" style="left:1396px;top:598px;width:10px"><b></b><i></i></div>
<div class="t" style="left:1415px;top:598px;width:10px"><b></b><i></i></div>
<div class="t" style="left:1454px;top:598px;width:10px"><b></b><i></i></div>
<div class="t" style="left:1492px;top:598px;width:10px"><b></b><i></i></div>
<div class="t" style="left:1531px;top:598px;width:10px"><b></b><i></i></div>

<div class="a" style="left:303px;top:659px;width:1238px;height:17px;background:#4a7b78;border-radius:2px;color:#eaf3f2;font-size:11px;line-height:17px;padding-left:12px;letter-spacing:-0.5px">Master - Volume</div>
<svg class="a" style="left:303px;top:685px" width="1238" height="33"><path d="M0 1 H1185 Q1225 3 1238 32 V33 H0 Z" fill="rgba(95,120,125,.35)"/><path d="M0 1 H1185 Q1225 3 1238 32" fill="none" stroke="#bfe6e0" stroke-width="1"/></svg>

<svg width="0" height="0" style="position:absolute"><defs><g id="lk"><circle cx="2.5" cy="8.5" r="1.8" fill="none" stroke="#fff" stroke-width="1"/><circle cx="8.5" cy="2.5" r="1.8" fill="none" stroke="#fff" stroke-width="1"/><line x1="3.8" y1="7.2" x2="7.2" y2="3.8" stroke="#fff" stroke-width="1"/></g></defs></svg>
<svg class="a" style="left:303px;top:51px" width="11" height="11"><use href="#lk"/></svg>
<svg class="a" style="left:690px;top:51px" width="11" height="11"><use href="#lk"/></svg>
<svg class="a" style="left:845px;top:51px" width="11" height="11"><use href="#lk"/></svg>
<svg class="a" style="left:923px;top:51px" width="11" height="11"><use href="#lk"/></svg>
<svg class="a" style="left:1077px;top:51px" width="11" height="11"><use href="#lk"/></svg>
<svg class="a" style="left:1155px;top:51px" width="11" height="11"><use href="#lk"/></svg>
<svg class="a" style="left:1310px;top:51px" width="11" height="11"><use href="#lk"/></svg>
<svg class="a" style="left:1387px;top:51px" width="11" height="11"><use href="#lk"/></svg>
<svg class="a" style="left:303px;top:662px" width="11" height="11"><use href="#lk"/></svg>

</div></body></html>
